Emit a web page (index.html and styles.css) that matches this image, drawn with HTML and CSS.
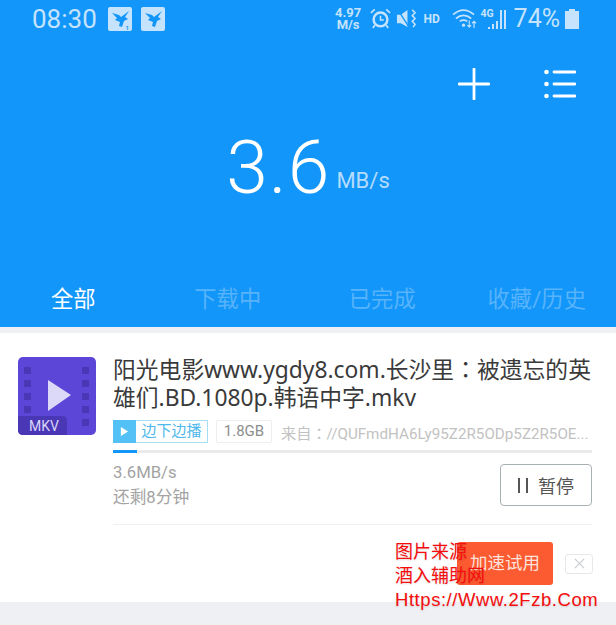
FILE: index.html
```html
<!DOCTYPE html>
<html lang="zh">
<head>
    <meta charset="UTF-8">
    <title>下载</title>
    <link rel="stylesheet" href="styles.css">
</head>
<body>
    <div class="page">
        <!-- Top blue area -->
        <header class="top">
            <div class="statusbar">
                <span class="time">08:30</span>
                <svg class="notif" viewBox="0 0 24 24"><rect width="24" height="24" rx="2" fill="#c5e3fc"/><path d="M4 6l7 2 2 2 8-6-4 6 3 2-4 2-2 6-3-1 1-4-5-2 2-2z" fill="#1296f9"/><text x="17.5" y="22.5" class="notif-count">1</text></svg>
                <svg class="notif" viewBox="0 0 24 24"><rect width="24" height="24" rx="2" fill="#c5e3fc"/><path d="M4 6l7 2 2 2 8-6-4 6 3 2-4 2-2 6-3-1 1-4-5-2 2-2z" fill="#1296f9"/></svg>
                <div class="status-right">
                    <span class="netspeed">4.97<br>M/s</span>
                    <svg class="sicon alarm" viewBox="0 0 22 22"><circle cx="11" cy="12" r="7.2" fill="none" stroke="#c5e3fc" stroke-width="2.6"/><path d="M11 8v4.5h3.5" fill="none" stroke="#c5e3fc" stroke-width="1.6"/><path d="M1 5l4-3.5M21 5l-4-3.5M5 18l-2 3M17 18l2 3" stroke="#c5e3fc" stroke-width="1.8"/></svg>
                    <svg class="sicon mute" viewBox="0 0 22 22"><path d="M1 7h4l7-5v18l-7-4H1z" fill="#c5e3fc"/><path d="M2 2l11 17" stroke="#1296f9" stroke-width="1.4"/><path d="M17 2l3 3-3 3 3 3-3 3 3 3-2 3" fill="none" stroke="#c5e3fc" stroke-width="1.6"/></svg>
                    <span class="hd">HD</span>
                    <svg class="sicon wifi" viewBox="0 0 26 22"><path d="M1 7c7-6 15-6 22 0M4 11c5-4 11-4 16 0M8 14c3-2 5-2 8 0" fill="none" stroke="#c5e3fc" stroke-width="1.8"/><circle cx="12" cy="18" r="1.7" fill="#c5e3fc"/><path d="M18 13v7M16 18l2 2 2-2M23 21v-7M21 16l2-2 2 2" fill="none" stroke="#c5e3fc" stroke-width="1.2"/></svg>
                    <div class="signal">
                        <span class="net">4G</span>
                        <svg class="bars" viewBox="0 0 18 20"><path d="M1 20v-2M5 20v-5M9 20v-8M13 20V1M17 20V1" stroke="#c5e3fc" stroke-width="2"/></svg>
                    </div>
                    <span class="battery-text">74%</span>
                    <svg class="battery" viewBox="0 0 14 20"><path d="M4 0h6v2h4v18H0V2h4z" fill="#c5e3fc"/></svg>
                </div>
            </div>
            <div class="actions">
                <svg class="action" viewBox="0 0 32 32"><path d="M16 1v30M1 16h30" stroke="#fff" stroke-width="2.8" stroke-linecap="round"/></svg>
                <svg class="action" viewBox="0 0 32 32"><path d="M10 4h21M10 16h21M10 28h21" stroke="#fff" stroke-width="2.8" stroke-linecap="round"/><circle cx="2.5" cy="4" r="2.3" fill="#fff"/><circle cx="2.5" cy="16" r="2.3" fill="#fff"/><circle cx="2.5" cy="28" r="2.3" fill="#fff"/></svg>
            </div>
            <div class="speed"><span class="speed-num">3.6</span><span class="speed-unit">MB/s</span></div>
            <nav class="tabs">
                <span class="tab active">全部</span>
                <span class="tab">下载中</span>
                <span class="tab">已完成</span>
                <span class="tab">收藏/历史</span>
            </nav>
        </header>

        <!-- Download item -->
        <section class="card">
            <div class="item">
                <svg class="file-icon" viewBox="0 0 78 78">
                    <rect width="78" height="78" rx="5" fill="#5b46d8"/>
                    <g fill="#4a37b5">
                        <rect x="6" y="10" width="7" height="7"/><rect x="6" y="23" width="7" height="7"/><rect x="6" y="36" width="7" height="7"/><rect x="6" y="49" width="7" height="7"/>
                        <rect x="64" y="10" width="7" height="7"/><rect x="64" y="23" width="7" height="7"/><rect x="64" y="36" width="7" height="7"/><rect x="64" y="49" width="7" height="7"/><rect x="64" y="62" width="7" height="7"/>
                        <path d="M0 59h44q5 0 5 5v14H5q-5 0-5-5z"/>
                    </g>
                    <path d="M30 23l23 15-23 16z" fill="#dcd8f8"/>
                    <text x="26" y="74" class="file-ext">MKV</text>
                </svg>
                <div class="info">
                    <div class="name">阳光电影www.ygdy8.com.长沙里<span class="colon" lang="zh-Hant">：</span>被遗忘的英雄们.BD.1080p.韩语中字.mkv</div>
                    <div class="meta">
                        <span class="play-tag"><span class="play-box"><svg viewBox="0 0 10 12" class="play-tri"><path d="M1 1l8 5-8 5z" fill="#fff"/></svg></span><span class="play-text">边下边播</span></span>
                        <span class="size-tag">1.8GB</span>
                        <span class="source">来自<span class="colon" lang="zh-Hant">：</span>//QUFmdHA6Ly95Z2R5ODp5Z2R5OE...</span>
                    </div>
                    <div class="progress"><div class="progress-fill"></div></div>
                    <div class="status">
                        <div class="status-text">
                            <div>3.6MB/s</div>
                            <div>还剩8分钟</div>
                        </div>
                        <div class="pause"><span class="pause-bars"></span>暂停</div>
                    </div>
                </div>
            </div>
            <div class="trial">
                <span class="trial-btn">加速试用</span>
                <span class="close"><svg viewBox="0 0 12 12" class="close-x"><path d="M1 1l10 10M11 1L1 11" stroke="#c9cdd0" stroke-width="1.4"/></svg></span>
            </div>
        </section>
        <div class="footer"></div>

        <!-- Watermark -->
        <div class="watermark">图片来源<br>酒入辅助网<br><span class="wm-url">Https://Www.2Fzb.Com</span></div>
    </div>
</body>
</html>
```

FILE: styles.css
```css
* {
    box-sizing: border-box;
}

html, body {
    margin: 0;
    padding: 0;
}

body {
    font-family: "Roboto", "Noto Sans CJK SC", sans-serif;
    background-color: #eef0f3;
}

.page {
    position: relative;
    width: 616px;
    height: 625px;
    overflow: hidden;
    display: flex;
    flex-direction: column;
}

.top {
    height: 327px;
    background-color: #1296f9;
    display: flex;
    flex-direction: column;
}

.statusbar {
    height: 37px;
    padding: 0 37px 0 32px;
    display: flex;
    align-items: center;
    color: #c5e3fc;
}

.time {
    font-size: 26px;
    margin-right: 11px;
}

.notif {
    width: 24px;
    height: 24px;
    margin-right: 9px;
}

.notif-count {
    font-size: 6px;
    font-weight: 700;
    fill: #1296f9;
}

.status-right {
    margin-left: auto;
    display: flex;
    align-items: center;
}

.netspeed {
    width: 27px;
    font-size: 13px;
    font-weight: 700;
    line-height: 12px;
    text-align: center;
    margin-right: 8px;
}

.sicon {
    height: 21px;
}

.alarm {
    width: 21px;
    margin-right: 5px;
}

.mute {
    width: 21px;
    margin-right: 7px;
}

.hd {
    width: 17px;
    font-size: 12px;
    font-weight: 700;
    white-space: nowrap;
    margin-right: 11px;
}

.wifi {
    width: 25px;
    margin-right: 4px;
}

.signal {
    position: relative;
    width: 25px;
    height: 21px;
}

.net {
    position: absolute;
    left: 0;
    top: -1px;
    font-size: 10.5px;
    font-weight: 700;
}

.bars {
    position: absolute;
    right: 0;
    bottom: 0;
    width: 18px;
    height: 20px;
}

.battery-text {
    font-size: 25px;
    margin: 0 5px 0 8px;
}

.battery {
    width: 14px;
    height: 20px;
}

.actions {
    display: flex;
    justify-content: flex-end;
    gap: 54px;
    padding: 31px 40px 0 0;
}

.action {
    width: 32px;
    height: 32px;
}

.speed {
    display: flex;
    align-items: flex-end;
    justify-content: center;
    color: #fff;
    margin-top: 25px;
}

.speed-num {
    font-size: 75px;
    font-weight: 300;
    line-height: 84px;
    letter-spacing: 1px;
}

.speed-unit {
    font-size: 22px;
    color: #b5dcfb;
    margin-left: 6px;
    margin-bottom: 16px;
}

.tabs {
    display: grid;
    grid-template-columns: repeat(4, 154.5px);
    margin-top: auto;
    margin-left: -4px;
    height: 52px;
    padding-bottom: 8px;
    align-items: center;
    justify-items: center;
}

.tab {
    font-size: 22.3px;
    color: #57b3fb;
    white-space: nowrap;
}

.active {
    color: #fff;
}

.card {
    margin-top: 6px;
    height: 269px;
    background-color: #fff;
    padding: 24px 24px 0 18px;
}

.item {
    display: flex;
    gap: 17px;
}

.file-icon {
    width: 78px;
    height: 78px;
    flex-shrink: 0;
}

.file-ext {
    font-size: 14px;
    fill: #d8d4f6;
    text-anchor: middle;
}

.info {
    flex: 1;
    min-width: 0;
}

.name {
    font-family: "Noto Sans", "Noto Sans CJK SC", sans-serif;
    font-size: 22.8px;
    line-height: 28px;
    color: #3a3a3a;
    margin-top: -2px;
    margin-bottom: 8px;
}

.colon {
    font-family: "Noto Sans CJK TC", sans-serif;
}

.meta {
    display: flex;
    align-items: center;
    height: 23px;
    font-size: 15px;
}

.play-tag {
    display: flex;
    height: 23px;
    width: 95px;
    border: 1px solid #a5dff3;
    margin-right: 8px;
}

.play-box {
    width: 23px;
    margin: -1px 0 -1px -1px;
    background-color: #53c1f5;
    display: flex;
    align-items: center;
    justify-content: center;
}

.play-tri {
    width: 9px;
    height: 11px;
}

.play-text {
    flex: 1;
    text-align: center;
    color: #4fb8ec;
    line-height: 21px;
}

.size-tag {
    width: 56px;
    height: 23px;
    line-height: 21px;
    text-align: center;
    border: 1px solid #eceeef;
    border-radius: 2px;
    color: #8d8d8d;
    margin-right: 9px;
}

.source {
    color: #c2c2c2;
    white-space: nowrap;
    font-size: 15.2px;
}

.progress {
    height: 3px;
    margin-top: 7px;
    background-color: #ebebeb;
}

.progress-fill {
    width: 24px;
    height: 3px;
    background-color: #1296f9;
}

.status {
    display: flex;
    justify-content: space-between;
    padding-top: 11px;
    padding-bottom: 14px;
    border-bottom: 1px solid #f1f1f1;
}

.status-text {
    font-size: 16.7px;
    line-height: 25px;
    color: #a3a3a3;
    margin-top: -4px;
}

.pause {
    width: 92px;
    height: 42px;
    border: 1px solid #a9b0b4;
    border-radius: 4px;
    display: flex;
    align-items: center;
    justify-content: center;
    font-size: 18px;
    color: #555;
}

.pause-bars {
    width: 10px;
    height: 15px;
    border-left: 2px solid #555;
    border-right: 2px solid #555;
    margin-right: 10px;
}

.trial {
    display: flex;
    justify-content: flex-end;
    align-items: center;
    margin-top: 17px;
    margin-right: -1px;
}

.trial-btn {
    width: 96px;
    height: 43px;
    line-height: 43px;
    text-align: center;
    background-color: #fc5a31;
    color: #fde3dc;
    border-radius: 3px;
    font-size: 17.5px;
    margin-right: 12px;
}

.close {
    width: 28px;
    height: 20px;
    border: 1px solid #e8e8e8;
    border-radius: 3px;
    display: flex;
    align-items: center;
    justify-content: center;
}

.close-x {
    width: 11px;
    height: 11px;
}

.footer {
    flex: 1;
    background-color: #eef0f3;
}

/* red text lies over the button */
.watermark {
    position: absolute;
    left: 395px;
    top: 540px;
    font-size: 18px;
    line-height: 24px;
    color: #f60d0d;
    white-space: nowrap;
    text-shadow: 0 1px 2px rgba(0, 0, 0, 0.15);
}

.wm-url {
    font-family: "Liberation Sans", sans-serif;
    font-size: 18.5px;
    letter-spacing: 0.55px;
}
```
